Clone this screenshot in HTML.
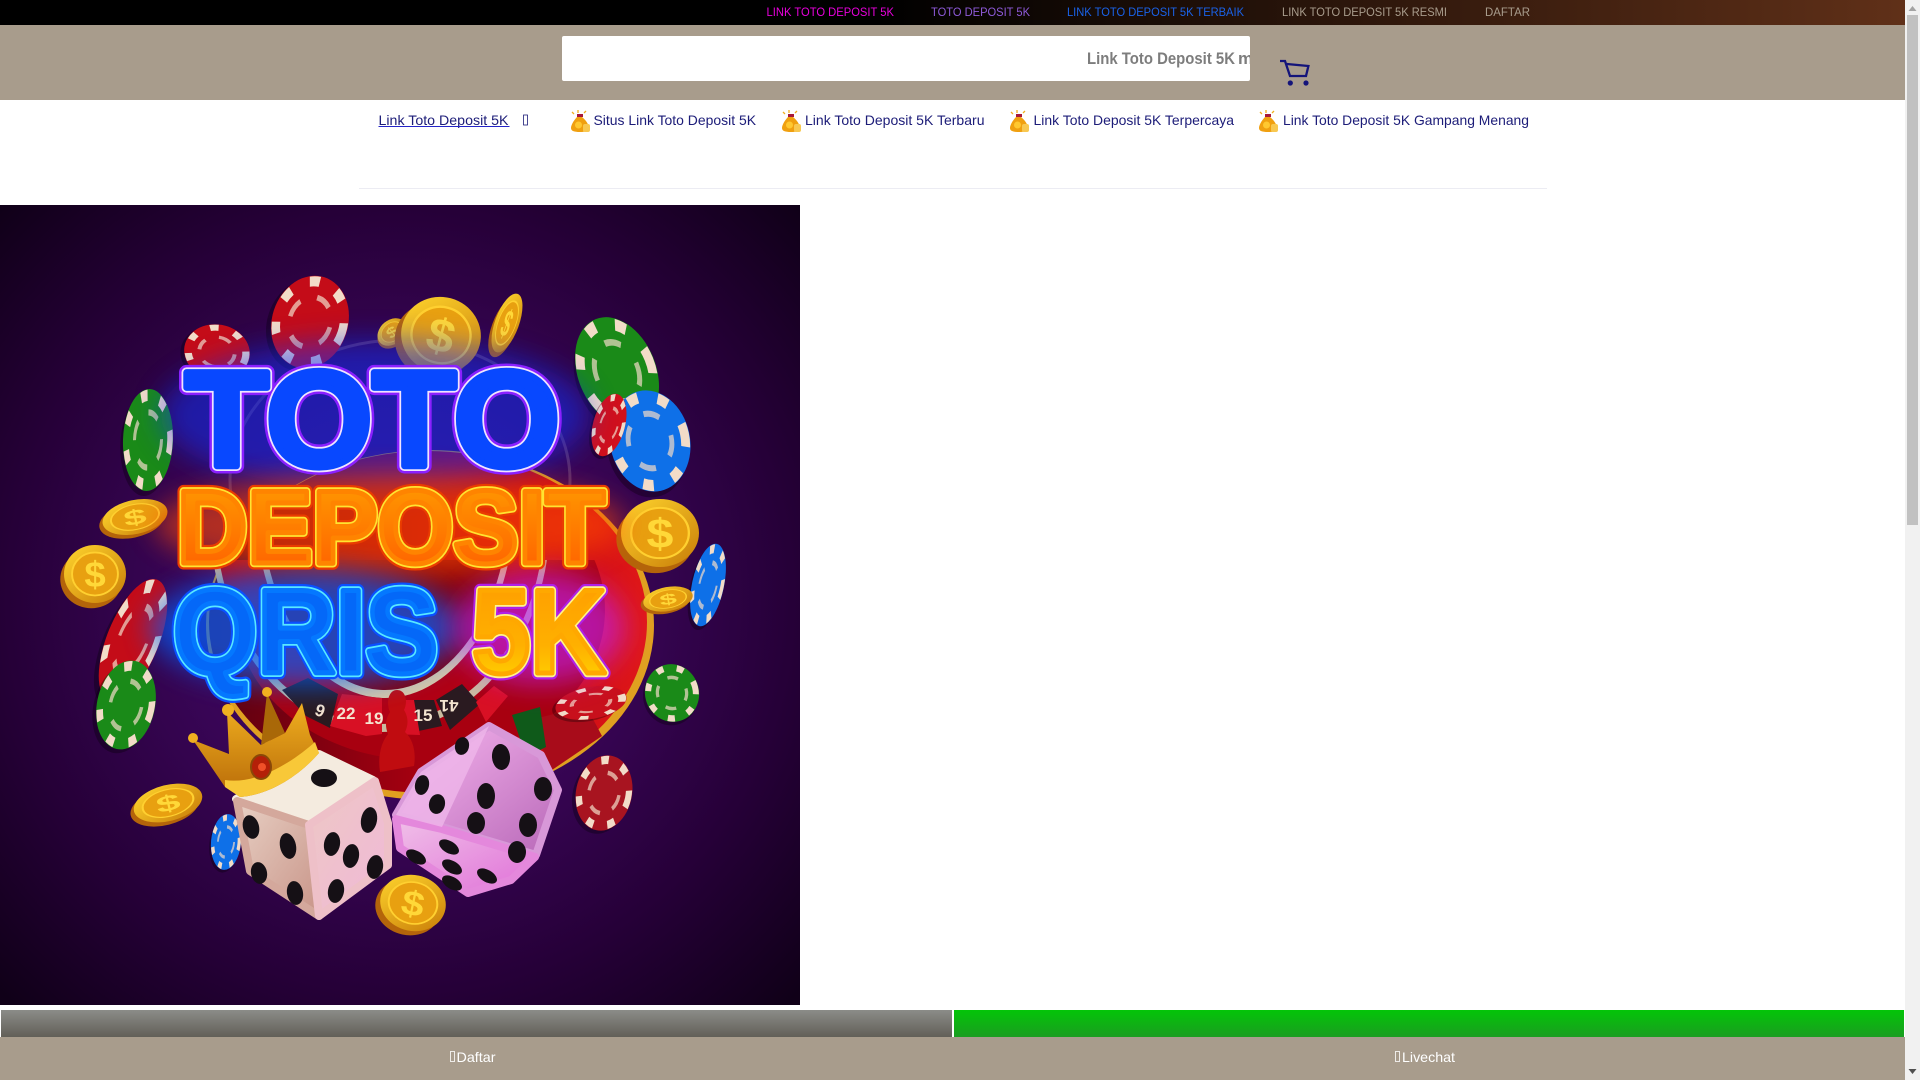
<!DOCTYPE html>
<html lang="id"><head><meta charset="utf-8"><title>Link Toto Deposit 5K</title>
<style>
html,body{margin:0;padding:0;width:1920px;height:1080px;overflow:hidden;background:#fff;font-family:"Liberation Sans",sans-serif}
.a{position:absolute}
svg{position:absolute;left:0;top:0;display:block}
</style></head><body>
<div class="a" style="left:0;top:0;width:1905px;height:25px;background:linear-gradient(90deg,#000 0,#000 46%,#603018 100%)"></div>
<div class="a" style="left:0;top:25px;width:1905px;height:75px;background:#a89c8c"></div>
<div class="a" style="left:562px;top:36px;width:688px;height:45px;background:#fff;border-radius:2px"></div>
<div class="a" style="left:359px;top:188px;width:1188px;height:1px;background:#ececf3"></div>

<svg width="800" height="800" viewBox="0 205 800 800" style="left:0;top:205px">
<defs>
<radialGradient id="bg" gradientUnits="userSpaceOnUse" cx="400" cy="600" r="560"><stop offset="0" stop-color="#50086e"/><stop offset=".4" stop-color="#380555"/><stop offset=".7" stop-color="#260038"/><stop offset="1" stop-color="#100018"/></radialGradient>
<linearGradient id="gold" x1="0" y1="0" x2="1" y2="1"><stop offset="0" stop-color="#ffd62e"/><stop offset="1" stop-color="#c87c08"/></linearGradient>
<linearGradient id="fivek" x1="0" y1="0" x2="0" y2="1"><stop offset="0" stop-color="#ff9a00"/><stop offset=".6" stop-color="#ffb000"/><stop offset="1" stop-color="#ffe000"/></linearGradient>
<linearGradient id="dep" x1="0" y1="0" x2="0" y2="1"><stop offset="0" stop-color="#ffa000"/><stop offset="1" stop-color="#ff5a00"/></linearGradient>
<linearGradient id="wl" x1="0" y1="0" x2="1" y2="1"><stop offset="0" stop-color="#e8d0c4"/><stop offset="1" stop-color="#c89488"/></linearGradient>
<linearGradient id="wr" x1="0" y1="0" x2="1" y2="1"><stop offset="0" stop-color="#eec8c4"/><stop offset="1" stop-color="#f0b8d8"/></linearGradient>
<linearGradient id="pk" x1="0" y1="0" x2="1" y2="1"><stop offset="0" stop-color="#f8b8f0"/><stop offset="1" stop-color="#b868b8"/></linearGradient>
<linearGradient id="pb" x1="0" y1="0" x2="1" y2="1"><stop offset="0" stop-color="#f0c0e8"/><stop offset="1" stop-color="#e070d8"/></linearGradient>
<linearGradient id="cr" x1="0" y1="0" x2="0" y2="1"><stop offset="0" stop-color="#f0b020"/><stop offset="1" stop-color="#b86a08"/></linearGradient>
<linearGradient id="rw" x1="0" y1="0" x2="1" y2="0"><stop offset="0" stop-color="#5a0010"/><stop offset=".6" stop-color="#b80010"/><stop offset="1" stop-color="#e01818"/></linearGradient>
<clipPath id="low"><rect x="0" y="560" width="800" height="300"/></clipPath>
<filter id="b14" x="-30%" y="-40%" width="160%" height="180%"><feGaussianBlur stdDeviation="14"/></filter>
<g id="chip"><circle cx="-5" cy="5" r="50" fill="#000" opacity=".3"/><circle r="50" fill="currentColor"/><circle r="44" fill="none" stroke="#f2dcc8" stroke-width="11" stroke-dasharray="13 25"/><circle r="27" fill="none" stroke="#f2dcc8" stroke-width="6" stroke-dasharray="20 22" opacity=".7"/></g>
<g id="coin"><circle cx="-6" cy="9" r="50" fill="#b4640a"/><circle r="50" fill="url(#gold)"/><circle r="37" fill="#e8a010" stroke="#ffd030" stroke-width="3"/><text x="0" y="22" font-family="Liberation Sans" font-weight="700" font-size="62" text-anchor="middle" fill="#ffd838">$</text></g>
</defs>
<rect x="0" y="205" width="800" height="800" fill="url(#bg)"/>

<!-- roulette -->
<ellipse cx="400" cy="480" rx="170" ry="140" fill="none" stroke="#c8a8b0" stroke-width="3" opacity=".25"/>
<ellipse cx="430" cy="625" rx="224" ry="175" fill="#e0a020"/>
<ellipse cx="428" cy="622" rx="219" ry="171" fill="url(#rw)"/>
<g clip-path="url(#low)">
<ellipse cx="420" cy="610" rx="185" ry="150" fill="#a80010"/>
<ellipse cx="380" cy="520" rx="170" ry="212" fill="#c8bca0"/>
<ellipse cx="380" cy="520" rx="164" ry="204" fill="#b00014"/>
<ellipse cx="385" cy="500" rx="130" ry="198" fill="#d8c8a8"/>
<ellipse cx="385" cy="500" rx="124" ry="190" fill="#80000c"/>
</g>
<path d="M282 690l24 26 24 12 8-34-30-16zM400 700l34 0 8 26-28 6zM436 700l26-16 18 20-30 26z" fill="#2a1a20"/>
<path d="M330 726l36 10 16-2 0-36-40-4zM420 735l-30-1 0-34 24 0zM476 702l18-16 14 10-22 26z" fill="#d81024"/>
<g font-family="Liberation Sans" font-size="17" font-weight="700" fill="#f4e4d0" text-anchor="middle">
<text transform="translate(322 705) rotate(200)">6</text><text x="346" y="719">22</text><text x="374" y="724">19</text><text x="423" y="721">15</text><text transform="translate(449 700) rotate(180)">41</text><text transform="translate(562 733) rotate(170)">37</text></g>
<path d="M530 720l56-14 16 30-50 34z" fill="#a80c1a"/><path d="M512 715l28-8 6 40-20 10z" fill="#0f5a1a"/>
<!-- knob -->
<path d="M397 690c9 0 11 12 7 20 5 8 4 16 1 22 9 8 11 22 9 34l-34 6c-2-14 0-28 8-38-3-8-3-14 2-22-4-8-2-22 7-22z" fill="#c00c10"/>

<!-- back items -->
<use href="#chip" color="#c40c18" transform="translate(217 352) rotate(10) scale(.66 .55)"/>
<use href="#chip" color="#c40c18" transform="translate(310 322) rotate(18) scale(.76 .94)"/>
<use href="#coin" transform="translate(392 332) rotate(-40) scale(.32 .24)"/>
<use href="#coin" transform="translate(507 323) rotate(20) scale(.24 .62)"/>
<use href="#coin" transform="translate(441 335) rotate(15) scale(.8 .76)"/>
<use href="#chip" color="#1a8a18" transform="translate(617 372) rotate(-22) scale(.78 1.14)"/>
<use href="#chip" color="#0e70e8" transform="translate(650 441) rotate(-12) scale(.8 1.02)"/>
<use href="#chip" color="#d0101c" transform="translate(609 425) rotate(15) scale(.32 .64)"/>
<use href="#chip" color="#1a8a18" transform="translate(148 440) rotate(2) scale(.5 1.02)"/>
<use href="#coin" transform="translate(135 517) rotate(-12) scale(.66 .34)"/>
<use href="#coin" transform="translate(95 574) rotate(0) scale(.62 .58)"/>
<use href="#coin" transform="translate(660 533) rotate(0) scale(.78 .68)"/>
<use href="#chip" color="#0e70e8" transform="translate(708 585) rotate(12) scale(.32 .84)"/>
<use href="#coin" transform="translate(668 599) rotate(-10) scale(.5 .24)"/>
<use href="#chip" color="#c40c18" transform="translate(133 640) rotate(22) scale(.52 1.3)"/>
<use href="#chip" color="#1a8a18" transform="translate(126 705) rotate(12) scale(.58 .9)"/>
<use href="#chip" color="#1a8a18" transform="translate(672 693) rotate(-15) scale(.54 .58)"/>
<use href="#chip" color="#c8101c" transform="translate(591 703) rotate(-10) scale(.72 .32)"/>
<use href="#chip" color="#a81420" transform="translate(604 793) rotate(12) scale(.56 .76)"/>
<use href="#coin" transform="translate(168 803) rotate(-14) scale(.7 .36)"/>
<use href="#chip" color="#0e70e8" transform="translate(226 842) rotate(5) scale(.3 .56)"/>
<use href="#coin" transform="translate(413 903) rotate(12) scale(.66 .56)"/>

<!-- neon words -->
<g font-family="Liberation Sans" font-weight="700" stroke-linejoin="round">
<ellipse cx="375" cy="415" rx="215" ry="75" fill="#1030ff" opacity=".5" filter="url(#b14)"/>
<ellipse cx="390" cy="525" rx="235" ry="50" fill="#ff4a00" opacity=".6" filter="url(#b14)"/>
<ellipse cx="305" cy="628" rx="155" ry="58" fill="#0060ff" opacity=".7" filter="url(#b14)"/>
<ellipse cx="540" cy="628" rx="85" ry="56" fill="#c020ff" opacity=".6" filter="url(#b14)"/>

<g font-size="136">
<text x="185" y="466" textLength="375" lengthAdjust="spacingAndGlyphs" fill="#0848ff" stroke="#8a20ff" stroke-width="15">TOTO</text>
<text x="185" y="466" textLength="375" lengthAdjust="spacingAndGlyphs" fill="#0848ff" stroke="#f0e4ff" stroke-width="10">TOTO</text>
<text x="185" y="466" textLength="375" lengthAdjust="spacingAndGlyphs" fill="#0848ff" stroke="#0848ff" stroke-width="6.500">TOTO</text>
</g>
<g font-size="104">
<text x="177" y="563" textLength="428" lengthAdjust="spacingAndGlyphs" fill="#ff7a00" stroke="#ea3c00" stroke-width="13">DEPOSIT</text>
<text x="177" y="563" textLength="428" lengthAdjust="spacingAndGlyphs" fill="#ff7a00" stroke="#ffe430" stroke-width="8.500">DEPOSIT</text>
<text x="177" y="563" textLength="428" lengthAdjust="spacingAndGlyphs" fill="url(#dep)" stroke="#ff8400" stroke-width="5">DEPOSIT</text>
</g>
<g font-size="120">
<text x="173" y="673" textLength="265" lengthAdjust="spacingAndGlyphs" fill="#0468f8" stroke="#0a50ff" stroke-width="13">QRIS</text>
<text x="173" y="673" textLength="265" lengthAdjust="spacingAndGlyphs" fill="#0468f8" stroke="#58e8ff" stroke-width="8.500">QRIS</text>
<text x="173" y="673" textLength="265" lengthAdjust="spacingAndGlyphs" fill="#0468f8" stroke="#0478ff" stroke-width="5">QRIS</text>
<text x="472" y="673" textLength="134" lengthAdjust="spacingAndGlyphs" fill="#ff8000" stroke="#b020e8" stroke-width="13">5K</text>
<text x="472" y="673" textLength="134" lengthAdjust="spacingAndGlyphs" fill="#ff8000" stroke="#fff48a" stroke-width="8.500">5K</text>
<text x="472" y="673" textLength="134" lengthAdjust="spacingAndGlyphs" fill="url(#fivek)" stroke="#ffa800" stroke-width="5">5K</text>
</g>
</g>

<!-- dice -->
<g stroke-linejoin="round" stroke-width="8">
<polygon points="236,799 319,754 373,780 309,823" fill="#f4ebdf" stroke="#f4ebdf"/>
<polygon points="237,801 309,825 319,916 250,871" fill="url(#wl)" stroke="#d4a89c"/>
<polygon points="309,825 375,781 388,823 388,865 319,916" fill="url(#wr)" stroke="#eec0c8"/>
<polygon points="489,726 541,755 558,790 536,855 442,827 396,815 421,772" fill="url(#pk)" stroke="#d898d8"/>
<polygon points="396,819 442,829 535,857 511,880 468,893 400,848" fill="url(#pb)" stroke="#e488dc"/>
<polygon points="396,815 421,772 489,726 442,827" fill="#efb6ea" opacity=".8" stroke="none"/>
</g>
<g fill="#151015">
<ellipse cx="324" cy="778" rx="13" ry="9"/>
<ellipse cx="251" cy="827" rx="8" ry="12" transform="rotate(-15 251 827)"/><ellipse cx="288" cy="846" rx="8" ry="13" transform="rotate(-12 288 846)"/><ellipse cx="259" cy="873" rx="8" ry="11" transform="rotate(-12 259 873)"/><ellipse cx="295" cy="893" rx="8" ry="12" transform="rotate(-10 295 893)"/>
<ellipse cx="369" cy="820" rx="8" ry="13" transform="rotate(10 369 820)"/><ellipse cx="332" cy="844" rx="8" ry="12" transform="rotate(10 332 844)"/><ellipse cx="351" cy="856" rx="8" ry="12" transform="rotate(10 351 856)"/><ellipse cx="375" cy="867" rx="8" ry="12" transform="rotate(10 375 867)"/><ellipse cx="336" cy="891" rx="8" ry="12" transform="rotate(10 336 891)"/>
<ellipse cx="462" cy="746" rx="7" ry="9" transform="rotate(12 462 746)"/><ellipse cx="501" cy="757" rx="9" ry="13" transform="rotate(-5 501 757)"/><ellipse cx="422" cy="785" rx="7" ry="10" transform="rotate(12 422 785)"/><ellipse cx="437" cy="804" rx="8" ry="10" transform="rotate(12 437 804)"/><ellipse cx="486" cy="796" rx="9" ry="13"/><ellipse cx="543" cy="789" rx="9" ry="12"/><ellipse cx="476" cy="823" rx="9" ry="11"/><ellipse cx="528" cy="825" rx="9" ry="12"/><ellipse cx="517" cy="852" rx="9" ry="11"/>
<ellipse cx="449" cy="847" rx="11" ry="6" transform="rotate(30 449 847)"/><ellipse cx="416" cy="857" rx="11" ry="6" transform="rotate(30 416 857)"/><ellipse cx="452" cy="867" rx="11" ry="6" transform="rotate(30 452 867)"/><ellipse cx="487" cy="876" rx="11" ry="6" transform="rotate(30 487 876)"/><ellipse cx="452" cy="883" rx="11" ry="6" transform="rotate(30 452 883)"/>
</g>
<!-- crown -->
<path d="M261 745L267 693L285 733Z" fill="#a96808"/>
<path d="M193 740L229 754L227 712L261 745L285 733L302 703L310 735L319 753C300 775 270 795 240 797L225 787Z" fill="url(#cr)"/>
<path d="M225 780C258 785 295 760 315 742L319 753C300 775 270 795 240 797L225 787Z" fill="#f8c838"/>
<circle cx="193" cy="738" r="5" fill="#f0b020"/><circle cx="228" cy="710" r="6" fill="#f0b020"/><circle cx="267" cy="692" r="5" fill="#f0b020"/>
<ellipse cx="261" cy="767" rx="10" ry="12" fill="#b42008" stroke="#8a4808" stroke-width="2"/><circle cx="262" cy="767" r="4" fill="#f05028"/>
</svg>

<div class="a" style="left:1px;top:1010px;width:951px;height:27px;background:linear-gradient(#8b8c88,#625f58)"></div>
<div class="a" style="left:954px;top:1010px;width:950px;height:27px;background:linear-gradient(#03c508,#1a9d20)"></div>
<div class="a" style="left:0;top:1037px;width:1905px;height:43px;background:#a89c8c"></div>

<!-- scrollbar -->
<div class="a" style="left:1905px;top:0;width:15px;height:1080px;background:#f1f1f1"></div>
<div class="a" style="left:1907px;top:15px;width:11px;height:510px;background:#c1c1c1"></div>

<svg width="1920" height="1080" viewBox="0 0 1920 1080" font-family="Liberation Sans, sans-serif">
<defs>
<g id="bag"><path d="M4 4l-2-2M8 3V0M14 3l2-2" stroke="#f0b020" stroke-width="1.300"/><path d="M7 5h6l-1 2c4 3 7 8 7 11 0 3-3 4-9 4s-9-1-9-4c0-3 3-8 6-11z" fill="#f0a010"/><rect x="7" y="4" width="6" height="3" fill="#a81838"/><circle cx="8.500" cy="15" r="3.500" fill="#ffc830"/><rect x="13" y="14" width="7" height="8" rx="2" fill="#f8c850"/></g>
</defs>
<g font-size="12">
<text x="766.500" y="16" textLength="127.500" lengthAdjust="spacingAndGlyphs" fill="#e800dc">LINK TOTO DEPOSIT 5K</text>
<text x="931" y="16" textLength="99" lengthAdjust="spacingAndGlyphs" fill="#8e5ad8">TOTO DEPOSIT 5K</text>
<text x="1067" y="16" textLength="177" lengthAdjust="spacingAndGlyphs" fill="#1a62e8">LINK TOTO DEPOSIT 5K TERBAIK</text>
<text x="1282" y="16" textLength="165" lengthAdjust="spacingAndGlyphs" fill="#a89c8c">LINK TOTO DEPOSIT 5K RESMI</text>
<text x="1485" y="16" textLength="45" lengthAdjust="spacingAndGlyphs" fill="#a89c8c">DAFTAR</text>
</g>
<svg x="562" y="36" width="688" height="45"><text x="525" y="28" font-size="17" font-weight="700" fill="#7d7d7d" textLength="148" lengthAdjust="spacingAndGlyphs">Link Toto Deposit 5K</text><text x="676" y="28" font-size="17" font-weight="700" fill="#7d7d7d">m</text></svg>
<path d="M1280 61h5l5 15h16l2.400-10-21.500-2" fill="none" stroke="#14147a" stroke-width="2.300"/>
<circle cx="1290.300" cy="83" r="2.600" fill="#14147a"/><circle cx="1306" cy="83" r="2.600" fill="#14147a"/>
<g font-size="14" fill="#1c1c78">
<text x="378.500" y="125" textLength="130" lengthAdjust="spacingAndGlyphs">Link Toto Deposit 5K</text>
<rect x="378.500" y="126" width="131" height="1" fill="#2424c8"/>
<rect x="523.500" y="115" width="4" height="10" fill="none" stroke="#1c1c78" stroke-width=".8"/>
<use href="#bag" x="570" y="110"/><text x="593.500" y="125" textLength="162.500" lengthAdjust="spacingAndGlyphs">Situs Link Toto Deposit 5K</text>
<use href="#bag" x="781" y="110"/><text x="805" y="125" textLength="179.500" lengthAdjust="spacingAndGlyphs">Link Toto Deposit 5K Terbaru</text>
<use href="#bag" x="1009" y="110"/><text x="1033.500" y="125" textLength="200.500" lengthAdjust="spacingAndGlyphs">Link Toto Deposit 5K Terpercaya</text>
<use href="#bag" x="1258" y="110"/><text x="1283" y="125" textLength="246" lengthAdjust="spacingAndGlyphs">Link Toto Deposit 5K Gampang Menang</text>
</g>
<g font-size="14" fill="#fff">
<rect x="450.500" y="1051.500" width="4" height="10" fill="none" stroke="#fff" stroke-width=".8"/>
<text x="456.500" y="1062" textLength="39" lengthAdjust="spacingAndGlyphs">Daftar</text>
<rect x="1395.500" y="1051.500" width="4" height="10" fill="none" stroke="#fff" stroke-width=".8"/>
<text x="1402" y="1062" textLength="53" lengthAdjust="spacingAndGlyphs">Livechat</text>
</g>
<polygon points="1912.500,6 1916.500,11 1908.500,11" fill="#a3a3a3"/>
<polygon points="1908.500,1069 1916.500,1069 1912.500,1074" fill="#505050"/>
</svg>
</body></html>
